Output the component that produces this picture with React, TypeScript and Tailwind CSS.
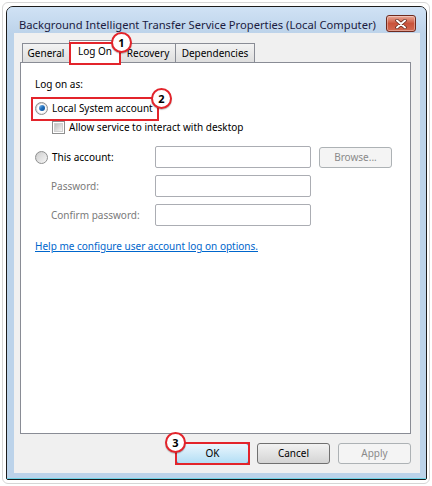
import React from "react";

const font = { fontFamily: '"Noto Sans", "Liberation Sans", Arial, sans-serif' };

function Badge({ n, className }: { n: string; className: string }) {
  return (
    <div
      className={`absolute w-[21px] h-[21px] rounded-full bg-white border-2 border-[#e3242b] flex items-center justify-center text-[11px] font-bold text-black leading-none shadow-[0_1px_1px_rgba(0,0,0,0.25)] ${className}`}
    >
      {n}
    </div>
  );
}

function Radio({ checked }: { checked?: boolean }) {
  return (
    <div className="w-[13px] h-[13px] rounded-full border border-[#8e8f8f] bg-gradient-to-br from-[#c9c9c9] to-[#f8f8f8] flex items-center justify-center shrink-0">
      {checked ? (
        <div className="w-[9px] h-[9px] rounded-full bg-white flex items-center justify-center">
          <div className="w-[6px] h-[6px] rounded-full bg-gradient-to-br from-[#8cc8f0] via-[#1f6fbd] to-[#0d4f96]" />
        </div>
      ) : (
        <div className="w-[9px] h-[9px] rounded-full bg-gradient-to-br from-[#d2d2d2] to-[#f2f2f2]" />
      )}
    </div>
  );
}

function Checkbox() {
  return (
    <div className="w-[13px] h-[13px] border border-[#8e8f8f] bg-white flex items-center justify-center shrink-0">
      <div className="w-[9px] h-[9px] bg-gradient-to-br from-[#bfbfbf] to-[#f4f4f4] border border-[#d0d0d0]" />
    </div>
  );
}

function Field() {
  return <div className="w-[156px] h-[22px] bg-white border border-[#abadb3] rounded-[2px]" />;
}

export default function App() {
  return (
    <div className="w-[432px] h-[486px] bg-white p-[2px]" style={font}>
      <div className="w-[428px] h-[482px] rounded-[6px] border border-[#d6d6d6] p-[3px]">
        <div className="w-[421px] h-[474px] rounded-t-[7px] rounded-b-[2px] border border-[#1c1c1c] bg-[#bcd3ea] flex flex-col">
          {/* title bar */}
          <div className="h-[26px] flex justify-between pl-[12px] pr-[10px] rounded-t-[6px] bg-gradient-to-b from-[#d0e2f5] to-[#bdd3ea]">
            <div className="pt-[11px] text-[11.2px] leading-[14px] text-[#1b1b3f] whitespace-nowrap">
              Background Intelligent Transfer Service Properties (Local Computer)
            </div>
            <div className="mt-[8px] w-[30px] h-[17px] rounded-[3px] border border-[#6e2a1e] bg-gradient-to-b from-[#e9a998] via-[#c9533b] to-[#d36a52] flex items-center justify-center shadow-[inset_0_0_0_1px_rgba(255,255,255,0.35)]">
              <svg width="12" height="10" viewBox="0 0 12 10">
                <path d="M2 1.5 L10 8.5 M10 1.5 L2 8.5" stroke="#5a2418" strokeWidth="3.4" strokeLinecap="round" />
                <path d="M2 1.5 L10 8.5 M10 1.5 L2 8.5" stroke="#ffffff" strokeWidth="2" strokeLinecap="round" />
              </svg>
            </div>
          </div>
          {/* body */}
          <div className="flex pl-[7px]">
            <div className="relative w-[406px] h-[440px] bg-[#f0f0f0] flex flex-col pl-[6px] pt-[7px] text-[10px] text-black">
              {/* tabs */}
              <div className="relative z-10 flex items-end h-[22px] pl-[2px]">
                <div className="w-[48px] h-[19px] border border-b-0 border-[#898c95] bg-gradient-to-b from-[#f3f3f3] to-[#dedede] flex items-center justify-center leading-none">
                  General
                </div>
                <div className="-ml-px w-[52px] h-[23px] -mb-px border border-b-0 border-[#898c95] bg-white flex items-center justify-center leading-none pb-[2px]">
                  Log On
                </div>
                <div className="-ml-px w-[56px] h-[19px] border border-b-0 border-[#898c95] bg-gradient-to-b from-[#f3f3f3] to-[#dedede] flex items-center justify-center leading-none">
                  Recovery
                </div>
                <div className="-ml-px w-[80px] h-[19px] border border-b-0 border-[#898c95] bg-gradient-to-b from-[#f3f3f3] to-[#dedede] flex items-center justify-center leading-none">
                  Dependencies
                </div>
              </div>
              {/* panel */}
              <div className="w-[391px] h-[372px] border border-[#898c95] bg-white flex flex-col pl-[14px]">
                <div className="mt-[13px] leading-[16px]">Log on as:</div>
                <div className="mt-[8px] flex items-center gap-[4px] h-[16px]">
                  <Radio checked />
                  <span>Local System account</span>
                </div>
                <div className="mt-[3px] flex items-center gap-[4px] h-[16px] pl-[17px]">
                  <Checkbox />
                  <span>Allow service to interact with desktop</span>
                </div>
                <div className="mt-[11px] flex items-center h-[22px]">
                  <div className="w-[120px] flex items-center gap-[4px]">
                    <Radio />
                    <span>This account:</span>
                  </div>
                  <Field />
                  <div className="ml-[8px] w-[73px] h-[21px] rounded-[3px] border border-[#adb2b5] bg-[#f4f4f4] text-[#8a8a8a] flex items-center justify-center">
                    Browse...
                  </div>
                </div>
                <div className="mt-[7px] flex items-center h-[22px]">
                  <div className="w-[120px] pl-[16px] text-[#7a7a7a]">Password:</div>
                  <Field />
                </div>
                <div className="mt-[7px] flex items-center h-[22px]">
                  <div className="w-[120px] pl-[16px] text-[#7a7a7a]">Confirm password:</div>
                  <Field />
                </div>
                <div className="mt-[12px] leading-[16px]">
                  <span className="text-[#0066cc] underline">Help me configure user account log on options.</span>
                </div>
              </div>
              {/* buttons */}
              <div className="mt-[9px] flex justify-end gap-[8px] pr-[9px]">
                <div className="w-[73px] h-[21px] rounded-[3px] border border-[#3c7fb1] bg-gradient-to-b from-[#eaf6fd] to-[#b3def5] flex items-center justify-center">
                  OK
                </div>
                <div className="w-[73px] h-[21px] rounded-[3px] border border-[#707070] bg-gradient-to-b from-[#f2f2f2] to-[#d4d4d4] flex items-center justify-center">
                  Cancel
                </div>
                <div className="w-[73px] h-[21px] rounded-[3px] border border-[#adb2b5] bg-[#f4f4f4] text-[#8a8a8a] flex items-center justify-center">
                  Apply
                </div>
              </div>

              {/* annotations */}
              <div className="absolute z-20 left-[55px] top-[9px] w-[52px] h-[23px] border-2 border-[#e3242b]" />
              <Badge n="1" className="z-30 left-[97px] top-[-1px]" />
              <div className="absolute z-20 left-[17px] top-[64px] w-[128px] h-[24px] border-2 border-[#e3242b]" />
              <Badge n="2" className="z-30 left-[137px] top-[55px]" />
              <div className="absolute z-20 left-[161px] top-[409px] w-[75px] h-[23px] border-2 border-[#e3242b]" />
              <Badge n="3" className="z-30 left-[151px] top-[399px]" />
            </div>
            <div className="w-[6px]" />
          </div>
          <div className="mt-auto h-px bg-[#6fd3e6]" />
        </div>
      </div>
    </div>
  );
}
